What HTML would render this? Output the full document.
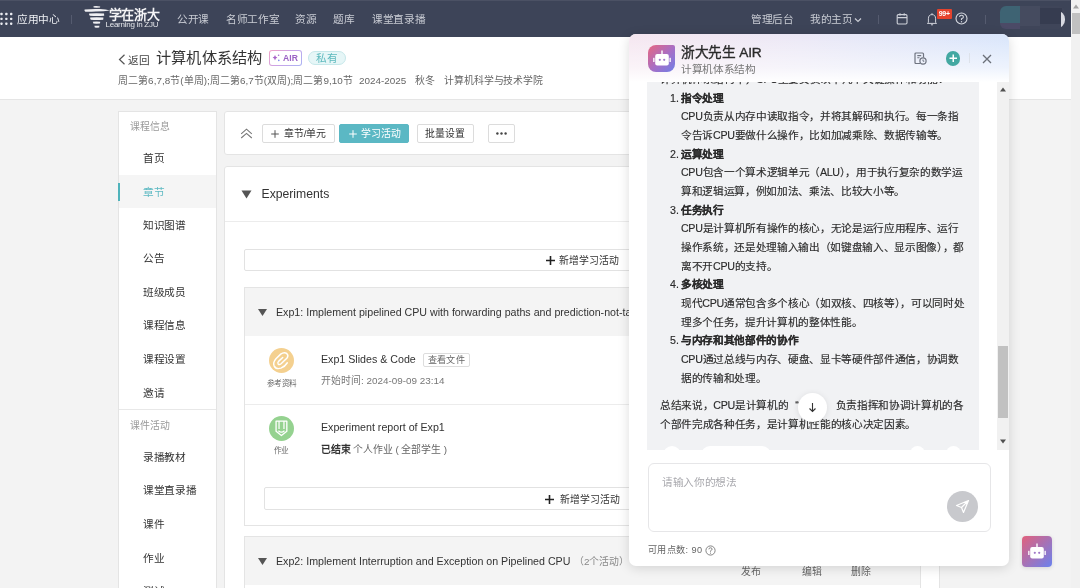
<!DOCTYPE html>
<html lang="zh-CN"><head><meta charset="utf-8">
<style>
*{box-sizing:border-box;margin:0;padding:0}
html,body{width:1080px;height:588px;overflow:hidden}
body{position:relative;background:#f3f3f3;font-family:"Liberation Sans",sans-serif;color:#333}
#root{position:absolute;left:0;top:0;width:1080px;height:588px;will-change:transform}
.a{position:absolute;white-space:nowrap}
.f14{font-size:10.67px;letter-spacing:-0.33px}
.f13{font-size:9.9px;letter-spacing:-0.1px}
.f12{font-size:9.14px;letter-spacing:0.14px}
.f10{font-size:7.62px;letter-spacing:-0.38px}
.f16{font-size:12.19px;letter-spacing:0.19px}
.f20{font-size:15.24px;letter-spacing:0.24px}
.f18{font-size:13.7px;letter-spacing:-0.3px}
.e14{font-size:10.67px}
.e13{font-size:9.9px}
.e16{font-size:12.19px}
#nav{position:absolute;left:0;top:0;width:1071px;height:37px;background:#3d4458}
.nt{position:absolute;top:12px;line-height:14px;color:#c9ccd4}
#hdr{position:absolute;left:0;top:37px;width:1071px;height:63px;background:#fff;border-bottom:1px solid #e5e5e5}
.card{position:absolute;background:#fff;border:1px solid #e4e4e4}
.side{color:#333;position:absolute;left:24px;line-height:14px}
.lbl{color:#999;position:absolute;left:11px;line-height:14px}
.btn{position:absolute;top:12px;height:19px;border:1px solid #dcdcdc;border-radius:2px;background:#fff;color:#333}
.msg{color:#2b2b2b;-webkit-text-stroke:0.15px #2b2b2b}
.ln{height:18.67px;line-height:18.67px;white-space:nowrap;position:relative}
.ln.c{padding-left:21px}
.ln .num{display:inline-block;width:11px;margin-left:10px;letter-spacing:0}
#scr{position:absolute;left:1071px;top:0;width:9px;height:588px;background:#f1f1f1}
</style></head><body><div id="root">

<!-- NAV -->
<div id="nav">
  <div class="a" style="left:0;top:0;width:1070px;height:1px;background:#4b5164"></div>
  <svg class="a" style="left:0;top:12px" width="13" height="14" viewBox="0 0 13 14" fill="#e8eaf0">
    <rect x="0.3" y="0.8" width="2.4" height="2.4" rx="0.8"/><rect x="5.15" y="0.8" width="2.4" height="2.4" rx="0.8"/><rect x="10" y="0.8" width="2.4" height="2.4" rx="0.8"/>
    <rect x="0.3" y="5.7" width="2.4" height="2.4" rx="0.8"/><rect x="5.15" y="5.7" width="2.4" height="2.4" rx="0.8"/><rect x="10" y="5.7" width="2.4" height="2.4" rx="0.8"/>
    <rect x="0.3" y="10.5" width="2.4" height="2.4" rx="0.8"/><rect x="5.15" y="10.5" width="2.4" height="2.4" rx="0.8"/><rect x="10" y="10.5" width="2.4" height="2.4" rx="0.8"/>
  </svg>
  <div class="nt f14" style="left:17px;color:#eef0f4">应用中心</div>
  <div class="a" style="left:71px;top:15px;width:1px;height:9px;background:#555b6f"></div>
  <!-- logo -->
  <svg class="a" style="left:84px;top:5px" width="26" height="24" viewBox="0 0 26 24" fill="#f0f0f3">
    <path d="M9.5 1.2 Q13 0.9 16.2 1.4 L16 2.6 Q12.5 2.9 9.6 2.6Z"/>
    <path d="M0.6 4.6 Q8 3.6 16 4 Q22 4.4 26 5.6 Q20 6.4 12 6.6 Q5 7 1.4 6.8 Q0 5.8 0.6 4.6Z"/>
    <path d="M5.2 8.6 Q12 8 20 8.6 L20.2 10.8 Q13 11.2 5.8 10.8 Q4.8 9.8 5.2 8.6Z"/>
    <path d="M6.2 12.6 Q12.5 12 19.4 12.6 L19.2 14.8 Q12.5 15.2 6.8 14.8 Q6 13.8 6.2 12.6Z"/>
    <path d="M8.8 16.8 Q12.5 16.4 16.2 16.8 L16 18.6 Q12.5 18.9 9.4 18.6Z"/>
    <path d="M10.4 20.8 Q12.8 20.5 15.4 20.8 L15.2 22.6 Q12.8 22.9 10.8 22.6Z"/>
  </svg>
  <div class="a" style="left:108.5px;top:6.5px;font-weight:bold;font-size:13px;line-height:16px;color:#f4f4f6;letter-spacing:-0.3px">学在浙大</div>
  <div class="a" style="left:105.5px;top:19.5px;font-size:8px;line-height:10px;color:#e4e6ea;letter-spacing:-0.25px">Learning in ZJU</div>
  <div class="nt f14" style="left:177px">公开课</div>
  <div class="nt f14" style="left:226px">名师工作室</div>
  <div class="nt f14" style="left:295px">资源</div>
  <div class="nt f14" style="left:333px">题库</div>
  <div class="nt f14" style="left:372px">课堂直录播</div>

  <div class="nt f14" style="left:751px">管理后台</div>
  <div class="nt f14" style="left:810px">我的主页</div>
  <svg class="a" style="left:854px;top:17px" width="8" height="6" viewBox="0 0 8 6"><path d="M1 1.5 L4 4.5 L7 1.5" fill="none" stroke="#c9ccd4" stroke-width="1.2"/></svg>
  <div class="a" style="left:878px;top:15px;width:1px;height:9px;background:#555b6f"></div>
  <svg class="a" style="left:896px;top:13px" width="12" height="12" viewBox="0 0 12 12"><rect x="1.2" y="1.6" width="9.8" height="9.4" rx="1.2" fill="none" stroke="#cfd2da" stroke-width="1.1"/><path d="M1.2 4.6H11M4 0.2V2.6M8.2 0.2V2.6" stroke="#cfd2da" stroke-width="1.1"/></svg>
  <svg class="a" style="left:926px;top:11.5px" width="12" height="14" viewBox="0 0 12 14"><path d="M2.4 10.5 V6.8 Q2.4 2.6 6 2.6 Q9.6 2.6 9.6 6.8 V10.5 L10.6 11.4 H1.4Z M4.9 12.4 Q6 13.8 7.1 12.4" fill="none" stroke="#cfd2da" stroke-width="1"/><path d="M6 1.2V2.6" stroke="#cfd2da" stroke-width="1"/></svg>
  <div class="a" style="left:936.5px;top:9px;width:15.5px;height:10px;background:#e5432d;border-radius:1px;color:#fff;font-size:7px;line-height:10px;text-align:center;font-weight:bold;letter-spacing:-0.3px">99+</div>
  <svg class="a" style="left:955px;top:12px" width="13" height="13" viewBox="0 0 13 13"><circle cx="6.5" cy="6.5" r="5.5" fill="none" stroke="#d6d9e0" stroke-width="1.1"/><path d="M4.6 5 Q4.6 3.2 6.5 3.2 Q8.4 3.2 8.4 4.9 Q8.4 6 6.5 6.8 V8" fill="none" stroke="#d6d9e0" stroke-width="1.1"/><circle cx="6.5" cy="9.8" r="0.7" fill="#d6d9e0"/></svg>
  <div class="a" style="left:985px;top:15px;width:1px;height:9px;background:#555b6f"></div>
  <!-- avatar blur -->
  <div class="a" style="left:1000px;top:6px;width:65px;height:23px;border-radius:6px;overflow:hidden;background:#3f4559">
    <div class="a" style="left:0;top:0;width:20px;height:17px;background:#3e6373"></div>
    <div class="a" style="left:0;top:17px;width:20px;height:6px;background:#4b4a66"></div>
    <div class="a" style="left:20px;top:0;width:20px;height:20px;background:#454b5f"></div>
    <div class="a" style="left:40px;top:2px;width:22px;height:16px;background:#363c50"></div>
  </div>
  <div class="a" style="left:1057px;top:11px;width:8px;height:17px;border-radius:0 9px 9px 0;background:#d8dae2;clip-path:inset(0 0 0 4px)"></div>
</div>

<!-- HEADER -->
<div id="hdr">
  <svg class="a" style="left:118px;top:17px" width="8" height="11" viewBox="0 0 8 11"><path d="M6.5 0.8 L1.5 5.5 L6.5 10.2" fill="none" stroke="#555" stroke-width="1.2"/></svg>
  <div class="a f14" style="left:128px;top:17px;line-height:13px;color:#444">返回</div>
  <div class="a f20" style="left:156px;top:12px;line-height:18px;color:#333">计算机体系结构</div>
  <div class="a" style="left:269px;top:13px;width:33px;height:15.5px;border-radius:3px;background:linear-gradient(135deg,#f2a3c4,#c9a3e8 50%,#aab4f4)"></div>
  <div class="a" style="left:270px;top:14px;width:31px;height:13.5px;border-radius:2px;background:#fff"></div>
  <div class="a" style="left:283px;top:14.8px;font-size:8.6px;line-height:13.5px;font-weight:bold;color:#9a62c4;letter-spacing:0.1px">AIR</div>
  <svg class="a" style="left:272px;top:17px" width="8" height="8" viewBox="0 0 8 8"><path d="M3 1 Q3.4 3.2 5.4 3.6 Q3.4 4 3 6.4 Q2.6 4 0.6 3.6 Q2.6 3.2 3 1Z" fill="#a863c8"/><circle cx="6.6" cy="1.3" r="0.8" fill="#a66ad0"/><circle cx="6.8" cy="6.4" r="0.8" fill="#7b86ee"/></svg>
  <div class="a f14" style="left:308px;top:14px;width:38px;height:14px;border:1px solid #c6e8ea;border-radius:7px;background:#e6f6f7;color:#5cb9bd;line-height:12px;text-align:center">私有</div>
  <div class="a f13" style="left:118px;top:37px;line-height:13px;color:#666;letter-spacing:0.04px">周二第6,7,8节(单周);周二第6,7节(双周);周二第9,10节</div>
  <div class="a e13" style="left:359px;top:37px;line-height:13px;color:#666">2024-2025</div>
  <div class="a f13" style="left:415px;top:37px;line-height:13px;color:#666">秋冬</div>
  <div class="a f13" style="left:444px;top:37px;line-height:13px;color:#666">计算机科学与技术学院</div>
</div>
<div class="card" style="left:118px;top:111px;width:99px;height:490px">
  <div class="lbl f13" style="top:8px">课程信息</div>
  <div class="side f14" style="top:39px">首页</div>
  <div class="a" style="left:0;top:63px;width:97px;height:33px;background:#f5f5f5"></div>
  <div class="a" style="left:-1px;top:71px;width:2px;height:18px;background:#4fb3bb"></div>
  <div class="side f14" style="top:73px;color:#5fbac3">章节</div>
  <div class="side f14" style="top:106px">知识图谱</div>
  <div class="side f14" style="top:139px">公告</div>
  <div class="side f14" style="top:173px">班级成员</div>
  <div class="side f14" style="top:206px">课程信息</div>
  <div class="side f14" style="top:240px">课程设置</div>
  <div class="side f14" style="top:274px">邀请</div>
  <div class="a" style="left:0;top:297px;width:97px;height:1px;background:#e8e8e8"></div>
  <div class="lbl f13" style="top:307px">课件活动</div>
  <div class="side f14" style="top:338px">录播教材</div>
  <div class="side f14" style="top:371px">课堂直录播</div>
  <div class="side f14" style="top:405px">课件</div>
  <div class="side f14" style="top:439px">作业</div>
  <div class="side f14" style="top:472px">测试</div>
</div>

<div class="card" style="left:224px;top:111px;width:716px;height:44px;border-radius:3px">
  <svg class="a" style="left:15px;top:16px" width="13" height="11" viewBox="0 0 13 11"><path d="M1.2 5.8 L6.5 1.2 L11.8 5.8 M1.2 10 L6.5 5.4 L11.8 10" fill="none" stroke="#777" stroke-width="1.1"/></svg>
  <div class="btn" style="left:37px;width:73px"></div>
  <svg class="a" style="left:46px;top:18px" width="8" height="8" viewBox="0 0 8 8"><path d="M4 0.2 V7.8 M0.2 4 H7.8" stroke="#555" stroke-width="1"/></svg>
  <div class="a f13" style="left:59px;top:15px;line-height:13px;color:#333">章节/单元</div>
  <div class="btn" style="left:114px;width:70px;background:#5bb8c4;border-color:#5bb8c4"></div>
  <svg class="a" style="left:123.5px;top:18px" width="8" height="8" viewBox="0 0 8 8"><path d="M4 0.2 V7.8 M0.2 4 H7.8" stroke="#fff" stroke-width="1"/></svg>
  <div class="a f13" style="left:136px;top:15px;line-height:13px;color:#fff;letter-spacing:0.1px">学习活动</div>
  <div class="btn" style="left:192px;width:57px"></div>
  <div class="a f13" style="left:200px;top:15px;line-height:13px;color:#333;letter-spacing:0.1px">批量设置</div>
  <div class="btn" style="left:263px;width:27px"></div>
  <svg class="a" style="left:271px;top:20px" width="11" height="3" viewBox="0 0 11 3" fill="#444"><circle cx="1.4" cy="1.5" r="1.2"/><circle cx="5.5" cy="1.5" r="1.2"/><circle cx="9.6" cy="1.5" r="1.2"/></svg>
</div>

<div class="card" style="left:224px;top:166px;width:716px;height:440px;border-radius:3px">
  <svg class="a" style="left:16px;top:23px" width="11" height="9" viewBox="0 0 11 9"><path d="M0.5 0.5 H10.5 L5.5 8.5Z" fill="#555"/></svg>
  <div class="a e16" style="left:36.5px;top:20px;line-height:15px;color:#333">Experiments</div>
  <div class="a" style="left:0;top:54px;width:714px;height:1px;background:#ececec"></div>
  <div class="a" style="left:19px;top:82px;width:690px;height:22px;border:1px solid #e2e2e2;border-radius:2px;background:#fff"></div>
  <svg class="a" style="left:321px;top:88.5px" width="9" height="9" viewBox="0 0 9 9"><path d="M4.5 0 V9 M0 4.5 H9" stroke="#222" stroke-width="1.6"/></svg>
  <div class="a f13" style="left:334px;top:87px;line-height:14px;color:#333">新增学习活动</div>
  <!-- exp1 -->
  <div class="a" style="left:19px;top:120px;width:677px;height:239px;border:1px solid #e4e4e4;background:#fff"></div>
  <div class="a" style="left:20px;top:121px;width:675px;height:48px;background:#f4f4f4"></div>
  <svg class="a" style="left:33px;top:142px" width="9" height="7" viewBox="0 0 9 7"><path d="M0 0 H9 L4.5 7Z" fill="#555"/></svg>
  <div class="a e14" style="left:51px;top:139px;line-height:13px;color:#333">Exp1: Implement pipelined CPU with forwarding paths and prediction-not-taken</div>
  <div class="a" style="left:44px;top:180.5px;width:25px;height:25px;border-radius:50%;background:#f4d08f"><svg class="a" style="left:0;top:0" width="25" height="25" viewBox="0 0 24.4 24.4"><path d="M17.9 14.4 Q15.4 18.4 11.6 19.7 Q6.8 21.2 5 17.4 Q3.6 14 6.8 10.4 L11.4 6 Q14.6 3.6 17.3 5.3 Q19.4 7.2 17.6 9.8 L11.8 15.4 Q10 16.9 8.9 15.6 Q8.1 14.4 9.6 12.8 L13.4 9.2" fill="none" stroke="#fff" stroke-width="1.4" stroke-linecap="round"/></svg></div>
  <div class="a f10" style="left:41.5px;top:211.5px;line-height:9px;color:#666">参考资料</div>
  <div class="a e14" style="left:96px;top:186px;line-height:13px;color:#333">Exp1 Slides &amp; Code</div>
  <div class="a f12" style="left:198px;top:186px;width:47px;height:14px;border:1px solid #ddd;border-radius:2px;line-height:12px;color:#666;text-align:center">查看文件</div>
  <div class="a e13" style="left:96px;top:208px;line-height:12px;color:#777">开始时间: 2024-09-09 23:14</div>
  <div class="a" style="left:20px;top:237px;width:675px;height:1px;background:#ececec"></div>
  <div class="a" style="left:44px;top:248.5px;width:25px;height:25px;border-radius:50%;background:#95d290"><svg class="a" style="left:0;top:0" width="25" height="25" viewBox="0 0 24.4 24.4"><path d="M6.9 5 H17.4 V14.8 L12.1 19 L6.9 14.8Z" fill="none" stroke="#fff" stroke-width="1.3" stroke-linejoin="round"/><path d="M9.8 5 V12.6 M14.6 5 V12.6 M9.2 14.4 Q12.1 17.2 15.1 14.4" fill="none" stroke="#fff" stroke-width="1.2"/></svg></div>
  <div class="a f10" style="left:48.5px;top:279px;line-height:9px;color:#666">作业</div>
  <div class="a e14" style="left:96px;top:254px;line-height:13px;color:#333">Experiment report of Exp1</div>
  <div class="a f13" style="left:96px;top:276px;line-height:13px;color:#666"><b style="color:#333">已结束</b> 个人作业 ( 全部学生 )</div>
  <div class="a" style="left:39px;top:320px;width:655px;height:23px;border:1px solid #e2e2e2;border-radius:2px;background:#fff"></div>
  <svg class="a" style="left:319.5px;top:327.5px" width="9" height="9" viewBox="0 0 9 9"><path d="M4.5 0 V9 M0 4.5 H9" stroke="#222" stroke-width="1.6"/></svg>
  <div class="a f13" style="left:335px;top:326px;line-height:14px;color:#333">新增学习活动</div>
  <!-- exp2 -->
  <div class="a" style="left:19px;top:369px;width:677px;height:80px;border:1px solid #e4e4e4;background:#fff"></div>
  <div class="a" style="left:20px;top:370px;width:675px;height:48px;background:#f4f4f4"></div>
  <svg class="a" style="left:33px;top:391px" width="9" height="7" viewBox="0 0 9 7"><path d="M0 0 H9 L4.5 7Z" fill="#555"/></svg>
  <div class="a e14" style="left:51px;top:388px;line-height:13px;color:#333">Exp2: Implement Interruption and Exception on Pipelined CPU</div>
  <div class="a f13" style="left:349px;top:388px;line-height:13px;color:#888">（2个活动）</div>
  <div class="a f13" style="left:516px;top:397.5px;line-height:13px;color:#666">发布</div>
  <div class="a f13" style="left:577px;top:397.5px;line-height:13px;color:#666">编辑</div>
  <div class="a f13" style="left:626px;top:397.5px;line-height:13px;color:#666">删除</div>
</div>

<div id="panel" class="a" style="left:629px;top:34px;width:380px;height:532px;background:#fff;border-radius:7px;box-shadow:0 2px 12px rgba(0,0,0,0.14);overflow:hidden">
  <!-- scroll area -->
  <div class="a" style="left:0;top:48px;width:380px;height:368px;overflow:hidden">
    <div class="a" style="left:18px;top:-41px;width:332px;height:449px;background:#f1f2f4;border-radius:6px"></div>
    <div class="a msg f14" style="left:31px;top:-12px;width:320px">
      <div class="ln">计算机体系结构中，CPU主要负责以下几个关键操作和功能：</div>
      <div class="ln"><span class="num">1.</span><b>指令处理</b></div>
      <div class="ln c">CPU负责从内存中读取指令，并将其解码和执行。每一条指</div>
      <div class="ln c">令告诉CPU要做什么操作，比如加减乘除、数据传输等。</div>
      <div class="ln"><span class="num">2.</span><b>运算处理</b></div>
      <div class="ln c">CPU包含一个算术逻辑单元（ALU），用于执行复杂的数学运</div>
      <div class="ln c">算和逻辑运算，例如加法、乘法、比较大小等。</div>
      <div class="ln"><span class="num">3.</span><b>任务执行</b></div>
      <div class="ln c">CPU是计算机所有操作的核心，无论是运行应用程序、运行</div>
      <div class="ln c">操作系统，还是处理输入输出（如键盘输入、显示图像），都</div>
      <div class="ln c">离不开CPU的支持。</div>
      <div class="ln"><span class="num">4.</span><b>多核处理</b></div>
      <div class="ln c">现代CPU通常包含多个核心（如双核、四核等），可以同时处</div>
      <div class="ln c">理多个任务，提升计算机的整体性能。</div>
      <div class="ln"><span class="num">5.</span><b>与内存和其他部件的协作</b></div>
      <div class="ln c">CPU通过总线与内存、硬盘、显卡等硬件部件通信，协调数</div>
      <div class="ln c">据的传输和处理。</div>
      <div class="ln" style="margin-top:8.8px">总结来说，CPU是计算机的<span style="display:inline-block;width:10.34px;text-align:right">“</span>大脑<span style="display:inline-block;width:5px;text-align:left">”</span><span style="display:inline-block;width:10.67px"></span>负责指挥和协调计算机的各</div>
      <div class="ln">个部件完成各种任务，是计算机性能的核心决定因素。</div>
    </div>
    <div class="a" style="left:34px;top:364px;width:18px;height:18px;border-radius:50%;background:#fff"></div>
    <div class="a" style="left:72px;top:364px;width:70px;height:18px;border-radius:9px;background:#fff"></div>
    <div class="a" style="left:281px;top:364px;width:15px;height:15px;border-radius:50%;background:#fff"></div>
    <div class="a" style="left:317px;top:364px;width:15px;height:15px;border-radius:50%;background:#fff"></div>
    <div class="a" style="left:169px;top:311px;width:29px;height:29px;border-radius:50%;background:#fff;box-shadow:0 1px 6px rgba(0,0,0,0.10)">
      <svg class="a" style="left:10px;top:9px" width="9" height="11" viewBox="0 0 9 11"><path d="M4.5 1 V9.5 M1.5 6.5 L4.5 9.5 L7.5 6.5" fill="none" stroke="#333" stroke-width="1.1"/></svg>
    </div>
    <!-- inner scrollbar -->
    <div class="a" style="left:368px;top:0;width:12px;height:368px;background:#f1f1f1">
      <svg class="a" style="left:3px;top:5px" width="6" height="5" viewBox="0 0 6 5"><path d="M0 4.5 L3 0.5 L6 4.5Z" fill="#505050"/></svg>
      <div class="a" style="left:1px;top:264px;width:10px;height:72px;background:#c1c1c1"></div>
      <svg class="a" style="left:3px;top:357px" width="6" height="5" viewBox="0 0 6 5"><path d="M0 0.5 L3 4.5 L6 0.5Z" fill="#505050"/></svg>
    </div>
  </div>
  <!-- header -->
  <div class="a" style="left:0;top:0;width:380px;height:48px;background:linear-gradient(to bottom,rgba(255,255,255,0) 0%,rgba(255,255,255,0.55) 70%,#fff 100%),linear-gradient(to right,#f5e6f0 0%,#ebe8f6 45%,#d8e5fb 100%)"></div>
  <div class="a" style="left:18.5px;top:10.5px;width:27.5px;height:27.5px;border-radius:8px 2px 8px 8px;background:linear-gradient(135deg,#e8667f 0%,#a56fc8 55%,#6e7fe6 100%)">
    <svg class="a" style="left:5px;top:5px" width="18" height="17" viewBox="0 0 18 17"><rect x="2.2" y="4" width="13.6" height="11.5" rx="2" fill="#fff"/><rect x="8.3" y="0.5" width="1.4" height="4" fill="#fff"/><rect x="0.2" y="7.8" width="1.3" height="4.2" fill="#fff"/><rect x="16.5" y="7.8" width="1.3" height="4.2" fill="#fff"/><circle cx="6.8" cy="9.8" r="1.1" fill="#a178c8"/><circle cx="11.2" cy="9.8" r="1.1" fill="#a178c8"/></svg>
  </div>
  <div class="a f18" style="left:52px;top:10px;line-height:17px;color:#2a2a2a;-webkit-text-stroke:0.35px #2a2a2a">浙大先生 AIR</div>
  <div class="a f14" style="left:52px;top:29px;line-height:13px;color:#777">计算机体系结构</div>
  <svg class="a" style="left:285px;top:18px" width="13" height="13" viewBox="0 0 13 13"><path d="M6 11.5 H2 Q1 11.5 1 10.5 V2 Q1 1 2 1 H8.5 Q9.5 1 9.5 2 V5.5" fill="none" stroke="#6f7480" stroke-width="1.2"/><path d="M3.3 3.6 H7.2 M3.3 5.8 H5.5" stroke="#6f7480" stroke-width="1.1"/><circle cx="9" cy="9" r="3.1" fill="none" stroke="#6f7480" stroke-width="1.2"/><path d="M9 7.5 V9.2 H10.3" fill="none" stroke="#6f7480" stroke-width="1"/></svg>
  <div class="a" style="left:316.5px;top:17px;width:14.5px;height:14.5px;border-radius:50%;background:#43a8a2">
    <svg class="a" style="left:3px;top:3px" width="8.5" height="8.5" viewBox="0 0 8.5 8.5"><path d="M4.25 0.5 V8 M0.5 4.25 H8" stroke="#fff" stroke-width="1.5"/></svg>
  </div>
  <div class="a" style="left:340px;top:19px;width:1px;height:10px;background:#dde2ea"></div>
  <svg class="a" style="left:352.5px;top:19.5px" width="10" height="10" viewBox="0 0 10 10"><path d="M1 1 L9 9 M9 1 L1 9" stroke="#6a6f78" stroke-width="1.3"/></svg>
  <!-- input -->
  <div class="a" style="left:18.5px;top:428.5px;width:343px;height:69px;border:1px solid #e6e6e8;border-radius:6px;background:#fff"></div>
  <div class="a f14" style="left:33px;top:441px;line-height:14px;color:#a8a8ad">请输入你的想法</div>
  <div class="a" style="left:318px;top:457px;width:31px;height:31px;border-radius:50%;background:#c8c9cd">
    <svg class="a" style="left:8px;top:8px" width="15" height="15" viewBox="0 0 15 15"><path d="M13.5 1.5 L1.5 6.5 L6.5 8.5 L8.5 13.5Z M13.5 1.5 L6.5 8.5" fill="none" stroke="#fff" stroke-width="1.2" stroke-linejoin="round"/></svg>
  </div>
  <div class="a f12" style="left:19px;top:510px;line-height:13px;color:#666;letter-spacing:0.4px">可用点数: 90</div>
  <svg class="a" style="left:76px;top:511px" width="11" height="11" viewBox="0 0 11 11"><circle cx="5.5" cy="5.5" r="4.6" fill="none" stroke="#777" stroke-width="0.9"/><path d="M3.9 4.3 Q3.9 2.8 5.5 2.8 Q7.1 2.8 7.1 4.2 Q7.1 5.1 5.5 5.8 V6.7" fill="none" stroke="#777" stroke-width="0.9"/><circle cx="5.5" cy="8.1" r="0.55" fill="#777"/></svg>
</div>

<div class="a" style="left:1022px;top:536px;width:30px;height:31px;border-radius:4px;background:linear-gradient(135deg,#e2617c,#6b82ee);box-shadow:0 1px 4px rgba(0,0,0,0.12)">
  <svg class="a" style="left:5px;top:6px" width="20" height="19" viewBox="0 0 20 19"><rect x="3.2" y="5" width="13.6" height="11.5" rx="2" fill="#fff"/><rect x="9.3" y="1.5" width="1.4" height="4" fill="#fff"/><rect x="1.2" y="8.8" width="1.3" height="4.2" fill="#fff"/><rect x="17.5" y="8.8" width="1.3" height="4.2" fill="#fff"/><circle cx="7.8" cy="10.8" r="1.1" fill="#a178c8"/><circle cx="12.2" cy="10.8" r="1.1" fill="#a178c8"/></svg>
</div>
<div id="scr">
  <svg class="a" style="left:1.5px;top:4px" width="6" height="5" viewBox="0 0 6 5"><path d="M0 4.5 L3 0.5 L6 4.5Z" fill="#a3a3a3"/></svg>
  <div class="a" style="left:0.5px;top:13px;width:8.5px;height:21px;background:#c1c1c1"></div>
</div>

</div></body></html>
